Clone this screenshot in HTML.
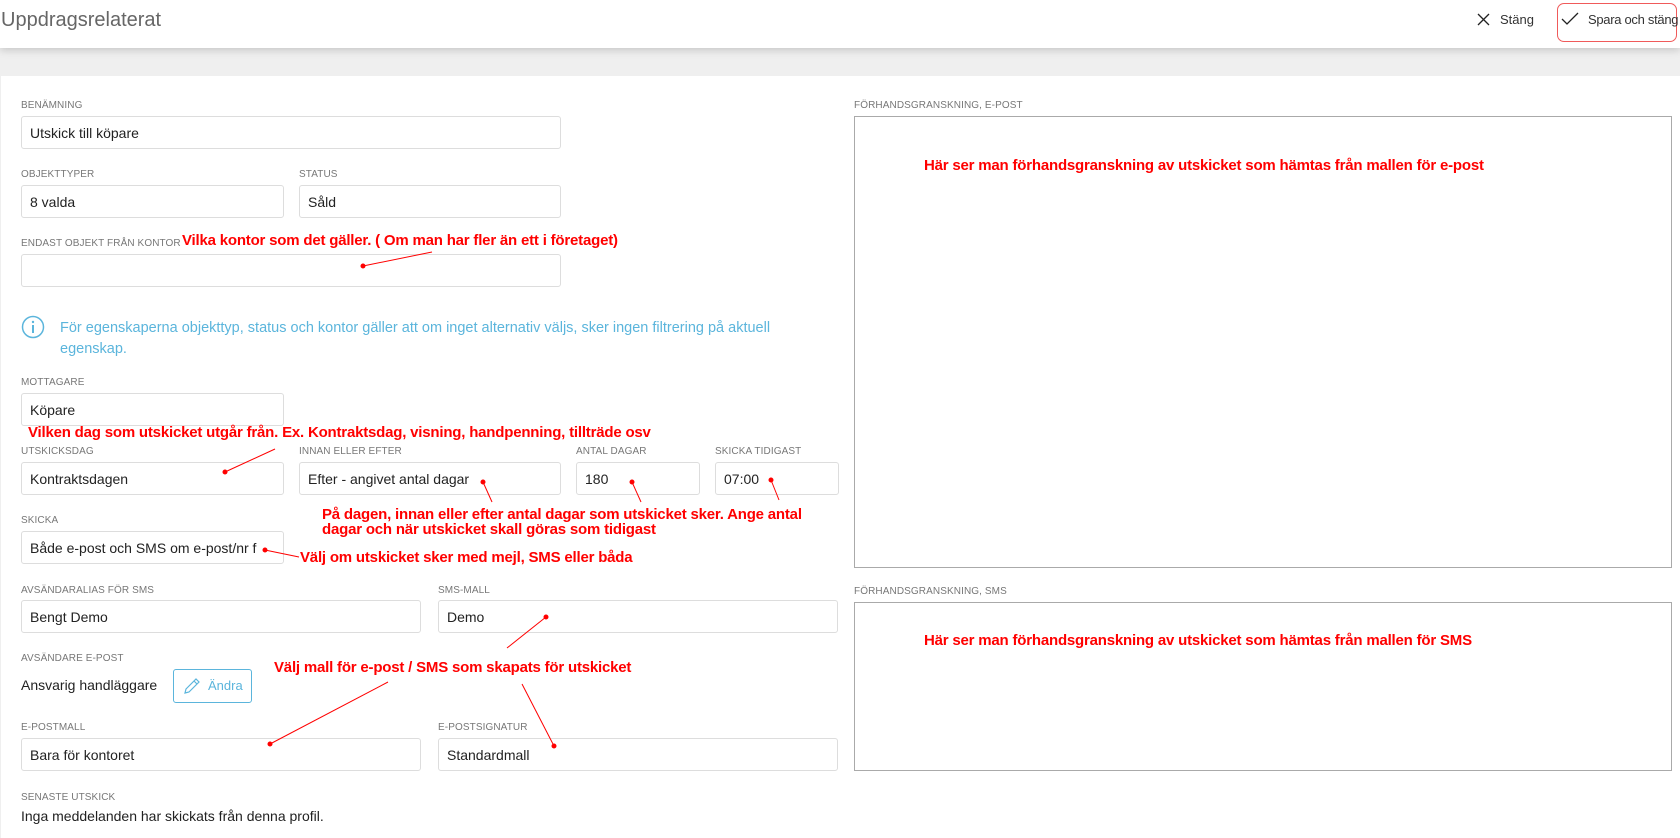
<!DOCTYPE html>
<html><head><meta charset="utf-8"><style>
*{box-sizing:border-box;margin:0;padding:0}
body{width:1680px;height:838px;position:relative;background:#efefef;font-family:"Liberation Sans",sans-serif;overflow:hidden;color:#222}
.hdr{position:absolute;left:0;top:0;width:1680px;height:48px;background:#fff;box-shadow:0 2px 8px rgba(0,0,0,.18)}
.panel{position:absolute;left:1px;top:76px;width:1679px;height:762px;background:#fff}
.a{position:absolute;white-space:nowrap}
.lb{position:absolute;font-size:10px;color:#777;letter-spacing:.1px;text-transform:uppercase;white-space:nowrap}
.in{position:absolute;border:1px solid #ddd;border-radius:3px;background:#fff;font-size:14px;color:#222;padding-left:8px;display:flex;align-items:center;white-space:nowrap;overflow:hidden}
.r{position:absolute;color:#f00;font-weight:bold;font-size:15px;white-space:nowrap;letter-spacing:-.2px}
.box{position:absolute;border:1px solid #aaa;background:#fff}
</style></head><body>
<div class="hdr"></div>
<div class="a" style="left:1px;top:9px;font-size:20px;color:#666">Uppdragsrelaterat</div>
<svg class="a" style="left:1477px;top:13px" width="13" height="13"><path d="M1 1L12 12M12 1L1 12" stroke="#222" stroke-width="1.3"/></svg>
<div class="a" style="left:1500px;top:12px;font-size:13px;color:#333">Stäng</div>
<div class="a" style="left:1557px;top:3px;width:120px;height:39px;border:1px solid #f05a5a;border-radius:7px"></div>
<svg class="a" style="left:1561px;top:12px" width="18" height="14"><path d="M1 7L6 12L17 1" stroke="#222" stroke-width="1.3" fill="none"/></svg>
<div class="a" style="left:1588px;top:12px;font-size:13px;color:#333;letter-spacing:-.3px">Spara och stäng</div>
<div class="panel"></div>

<div class="lb" style="left:21px;top:100px">Benämning</div>
<div class="in" style="left:21px;top:116px;width:540px;height:33px">Utskick till köpare</div>
<div class="lb" style="left:21px;top:169px">Objekttyper</div>
<div class="in" style="left:21px;top:185px;width:263px;height:33px">8 valda</div>
<div class="lb" style="left:299px;top:169px">Status</div>
<div class="in" style="left:299px;top:185px;width:262px;height:33px">Såld</div>
<div class="lb" style="left:21px;top:238px">Endast objekt från kontor</div>
<div class="in" style="left:21px;top:254px;width:540px;height:33px"></div>

<svg class="a" style="left:21px;top:315px" width="24" height="24"><circle cx="12" cy="12" r="10.5" stroke="#5bb5dc" stroke-width="1.5" fill="none"/><rect x="11" y="10" width="2" height="8" fill="#5bb5dc"/><circle cx="12" cy="7" r="1.2" fill="#5bb5dc"/></svg>
<div class="a" style="left:60px;top:318px;font-size:14.5px;color:#5bb5dc;line-height:21px">För egenskaperna objekttyp, status och kontor gäller att om inget alternativ väljs, sker ingen filtrering på aktuell<br>egenskap.</div>

<div class="lb" style="left:21px;top:377px">Mottagare</div>
<div class="in" style="left:21px;top:393px;width:263px;height:33px">Köpare</div>
<div class="lb" style="left:21px;top:446px">Utskicksdag</div>
<div class="in" style="left:21px;top:462px;width:263px;height:33px">Kontraktsdagen</div>
<div class="lb" style="left:299px;top:446px">Innan eller efter</div>
<div class="in" style="left:299px;top:462px;width:262px;height:33px">Efter - angivet antal dagar</div>
<div class="lb" style="left:576px;top:446px">Antal dagar</div>
<div class="in" style="left:576px;top:462px;width:124px;height:33px">180</div>
<div class="lb" style="left:715px;top:446px">Skicka tidigast</div>
<div class="in" style="left:715px;top:462px;width:124px;height:33px">07:00</div>
<div class="lb" style="left:21px;top:515px">Skicka</div>
<div class="in" style="left:21px;top:531px;width:263px;height:33px">Både e-post och SMS om e-post/nr f</div>

<div class="lb" style="left:21px;top:585px">Avsändaralias för SMS</div>
<div class="in" style="left:21px;top:600px;width:400px;height:33px">Bengt Demo</div>
<div class="lb" style="left:438px;top:585px">SMS-mall</div>
<div class="in" style="left:438px;top:600px;width:400px;height:33px">Demo</div>
<div class="lb" style="left:21px;top:653px">Avsändare e-post</div>
<div class="a" style="left:21px;top:677px;font-size:14px">Ansvarig handläggare</div>
<div class="a" style="left:173px;top:669px;width:79px;height:34px;border:1px solid #5bb5dc;border-radius:3px"></div>
<svg class="a" style="left:182px;top:676px" width="20" height="20"><path d="M3 17L4 13L14 3L17 6L7 16Z M12 5L15 8" stroke="#5bb5dc" stroke-width="1.2" fill="none"/></svg>
<div class="a" style="left:208px;top:678px;font-size:13px;color:#5bb5dc">Ändra</div>
<div class="lb" style="left:21px;top:722px">E-postmall</div>
<div class="in" style="left:21px;top:738px;width:400px;height:33px">Bara för kontoret</div>
<div class="lb" style="left:438px;top:722px">E-postsignatur</div>
<div class="in" style="left:438px;top:738px;width:400px;height:33px">Standardmall</div>
<div class="lb" style="left:21px;top:792px">Senaste utskick</div>
<div class="a" style="left:21px;top:808px;font-size:14px">Inga meddelanden har skickats från denna profil.</div>

<div class="lb" style="left:854px;top:100px">Förhandsgranskning, e-post</div>
<div class="box" style="left:854px;top:116px;width:818px;height:452px"></div>
<div class="lb" style="left:854px;top:586px">Förhandsgranskning, SMS</div>
<div class="box" style="left:854px;top:602px;width:818px;height:169px"></div>

<div class="r" style="left:182px;top:232px">Vilka kontor som det gäller. ( Om man har fler än ett i företaget)</div>
<div class="r" style="left:924px;top:157px">Här ser man förhandsgranskning av utskicket som hämtas från mallen för e-post</div>
<div class="r" style="left:924px;top:632px">Här ser man förhandsgranskning av utskicket som hämtas från mallen för SMS</div>
<div class="r" style="left:28px;top:424px">Vilken dag som utskicket utgår från. Ex. Kontraktsdag, visning, handpenning, tillträde osv</div>
<div class="r" style="left:322px;top:507px;line-height:15px">På dagen, innan eller efter antal dagar som utskicket sker. Ange antal<br>dagar och när utskicket skall göras som tidigast</div>
<div class="r" style="left:300px;top:549px">Välj om utskicket sker med mejl, SMS eller båda</div>
<div class="r" style="left:274px;top:659px">Välj mall för e-post / SMS som skapats för utskicket</div>

<svg class="a" style="left:0;top:0" width="1680" height="838">
<g stroke="#f00" stroke-width="1" fill="#f00">
<line x1="432" y1="252" x2="363" y2="266"/><circle cx="363" cy="266" r="2"/>
<line x1="275" y1="449" x2="225" y2="472"/><circle cx="225" cy="472" r="2"/>
<line x1="492" y1="502" x2="483" y2="482"/><circle cx="483" cy="482" r="2"/>
<line x1="641" y1="502" x2="632" y2="482"/><circle cx="632" cy="482" r="2"/>
<line x1="779" y1="500" x2="771" y2="480"/><circle cx="771" cy="480" r="2"/>
<line x1="299" y1="557" x2="265" y2="550"/><circle cx="265" cy="550" r="2"/>
<line x1="507" y1="648" x2="546" y2="617"/><circle cx="546" cy="617" r="2"/>
<line x1="388" y1="682" x2="270" y2="744"/><circle cx="270" cy="744" r="2"/>
<line x1="522" y1="684" x2="554" y2="746"/><circle cx="554" cy="746" r="2"/>
</g></svg>
</body></html>
